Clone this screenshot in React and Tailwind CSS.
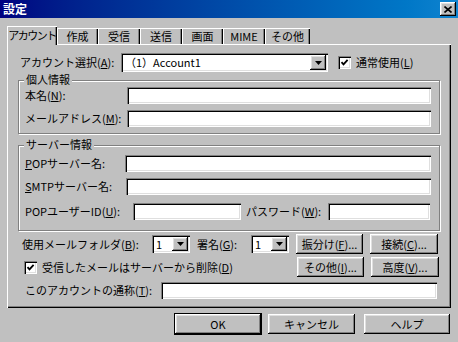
import React from 'react';

const raised = 'shadow-[inset_-1px_-1px_#000,inset_1px_1px_#fff,inset_-2px_-2px_#808080,inset_2px_2px_#dfdfdf]';
const sunken = 'shadow-[inset_1px_1px_#808080,inset_2px_2px_#000,inset_-1px_-1px_#fff,inset_-2px_-2px_#dfdfdf]';

function Field({ w, h = 'h-[17px]', children }) {
  return <div className={`${w} ${h} bg-white ${sunken} flex items-center pl-[4px] shrink-0`}>{children}</div>;
}

function Arrow() {
  return (
    <svg width="7" height="4" viewBox="0 0 7 4">
      <path d="M0 0h7L3.5 4z" fill="#000" />
    </svg>
  );
}

function Combo({ w, h, text }) {
  return (
    <div className={`${w} ${h} bg-white ${sunken} flex items-center p-[2px] shrink-0`}>
      <span className="flex-1 pl-[2px] leading-none">{text}</span>
      <div className={`w-[16px] h-full bg-[#c0c0c0] ${raised} flex items-center justify-center`}>
        <Arrow />
      </div>
    </div>
  );
}

function Check() {
  return (
    <div className={`w-[13px] h-[13px] bg-white ${sunken} flex items-center justify-center shrink-0`}>
      <svg width="9" height="9" viewBox="0 0 9 9">
        <path d="M1.5 4.2 L3.5 6.4 L7.6 1.8" stroke="#000" strokeWidth="1.8" fill="none" />
      </svg>
    </div>
  );
}

function Btn({ w, children, def }) {
  return (
    <div className={`${w} h-[20px] ${raised} flex items-center justify-center leading-none shrink-0 ${def ? 'outline outline-1 outline-black' : ''}`}>
      {children}
    </div>
  );
}

function Group({ title, h, className = '', children }) {
  return (
    <div className={`relative ml-[11px] w-[422px] ${h} border border-[#808080] shadow-[inset_1px_1px_#fff,1px_1px_#fff] ${className}`}>
      <span className="absolute -top-[7px] left-[5px] bg-[#c0c0c0] px-[2px] leading-none">{title}</span>
      {children}
    </div>
  );
}

export default function App() {
  const others = [
    ['作成', 'w-[41px]'],
    ['受信', 'w-[42px]'],
    ['送信', 'w-[42px]'],
    ['画面', 'w-[41px]'],
    ['MIME', 'w-[42px]'],
    ['その他', 'w-[45px]'],
  ];

  return (
    <div
      className="w-[458px] h-[342px] bg-[#c0c0c0] overflow-hidden flex flex-col text-[11px] text-black whitespace-nowrap"
      style={{ fontFamily: '"Noto Sans CJK JP", "Noto Sans", sans-serif' }}
    >
      {/* title bar */}
      <div className="h-[18px] bg-gradient-to-r from-[#000080] to-[#1084d0] flex items-center justify-between pl-[3px] pr-[2px]">
        <span className="text-white font-bold text-[12px] leading-none">設定</span>
        <div className={`w-[16px] h-[14px] bg-[#c0c0c0] ${raised} flex items-center justify-center`}>
          <svg width="8" height="7" viewBox="0 0 8 7">
            <path d="M0.5 0.5 L7.5 6.5 M7.5 0.5 L0.5 6.5" stroke="#000" strokeWidth="1.6" />
          </svg>
        </div>
      </div>

      {/* tabs */}
      <div className="pl-[7px] pt-[8px] h-[26px] flex items-end">
        <div className="relative z-10 -mb-px w-[50px] h-[19px] bg-[#c0c0c0] shadow-[inset_1px_1px_#fff,inset_-1px_0_#000,inset_-2px_0_#808080] flex items-center justify-center leading-none pb-[1px] tracking-[-1.5px]">
          アカウント
        </div>
        {others.map(([label, w]) => (
          <div
            key={label}
            className={`${w} h-[16px] shadow-[inset_1px_1px_#fff,inset_-1px_0_#000,inset_-2px_0_#808080] flex items-center justify-center leading-none`}
          >
            {label}
          </div>
        ))}
      </div>

      {/* panel */}
      <div className="ml-[7px] w-[444px] h-[264px] shadow-[inset_1px_1px_#fff,inset_-1px_-1px_#000,inset_-2px_-2px_#808080] flex flex-col pt-[9px]">
        <div className="flex items-center h-[19px] pl-[13px]">
          <span className="w-[101px] leading-none">アカウント選択(<u>A</u>):</span>
          <Combo w="w-[207px]" h="h-[19px]" text="（1）Account1" />
          <div className="ml-[10px]"><Check /></div>
          <span className="ml-[5px] leading-none">通常使用(<u>L</u>)</span>
        </div>

        <Group title="個人情報" h="h-[54px]" className="mt-[8px] pt-[6px] pl-[6px] flex flex-col gap-[6px]">
          <div className="flex items-center">
            <span className="w-[102px] leading-none">本名(<u>N</u>):</span>
            <Field w="w-[304px]" />
          </div>
          <div className="flex items-center">
            <span className="w-[102px] leading-none">メールアドレス(<u>M</u>):</span>
            <Field w="w-[304px]" />
          </div>
        </Group>

        <Group title="サーバー情報" h="h-[86px]" className="mt-[11px] pt-[9px] pl-[6px] flex flex-col gap-[6px]">
          <div className="flex items-center">
            <span className="w-[100px] leading-none"><u>P</u>OPサーバー名:</span>
            <Field w="w-[306px]" />
          </div>
          <div className="flex items-center">
            <span className="w-[101px] leading-none"><u>S</u>MTPサーバー名:</span>
            <Field w="w-[305px]" />
          </div>
          <div className="flex items-center mt-[2px]">
            <span className="w-[108px] leading-none">POPユーザーID(<u>U</u>):</span>
            <Field w="w-[108px]" />
            <span className="ml-[5px] w-[82px] leading-none">パスワード(<u>W</u>):</span>
            <Field w="w-[102px]" />
          </div>
        </Group>

        <div className="mt-[3px] h-[20px] flex items-center pl-[15px]">
          <span className="w-[130px] leading-none">使用メールフォルダ(<u>B</u>):</span>
          <Combo w="w-[38px]" h="h-[18px]" text="1" />
          <span className="ml-[7px] w-[54px] leading-none">署名(<u>G</u>):</span>
          <Combo w="w-[38px]" h="h-[18px]" text="1" />
          <div className="ml-[7px]"><Btn w="w-[67px]">振分け(<u>F</u>)...</Btn></div>
          <div className="ml-[7px]"><Btn w="w-[68px]">接続(<u>C</u>)...</Btn></div>
        </div>

        <div className="mt-[3px] h-[20px] flex items-center pl-[17px]">
          <Check />
          <span className="ml-[5px] w-[255px] leading-none">受信したメールはサーバーから削除(<u>D</u>)</span>
          <Btn w="w-[67px]">その他(<u>I</u>)...</Btn>
          <div className="ml-[7px]"><Btn w="w-[68px]">高度(<u>V</u>)...</Btn></div>
        </div>

        <div className="mt-[5px] h-[17px] flex items-center pl-[18px]">
          <span className="w-[136px] leading-none">このアカウントの通称(<u>T</u>):</span>
          <Field w="w-[276px]" />
        </div>
      </div>

      {/* buttons */}
      <div className="mt-[6px] pl-[175px] flex gap-[7px]">
        <Btn w="w-[86px]" def>OK</Btn>
        <Btn w="w-[87px]">キャンセル</Btn>
        <div className="ml-[2px]"><Btn w="w-[86px]">ヘルプ</Btn></div>
      </div>
    </div>
  );
}
